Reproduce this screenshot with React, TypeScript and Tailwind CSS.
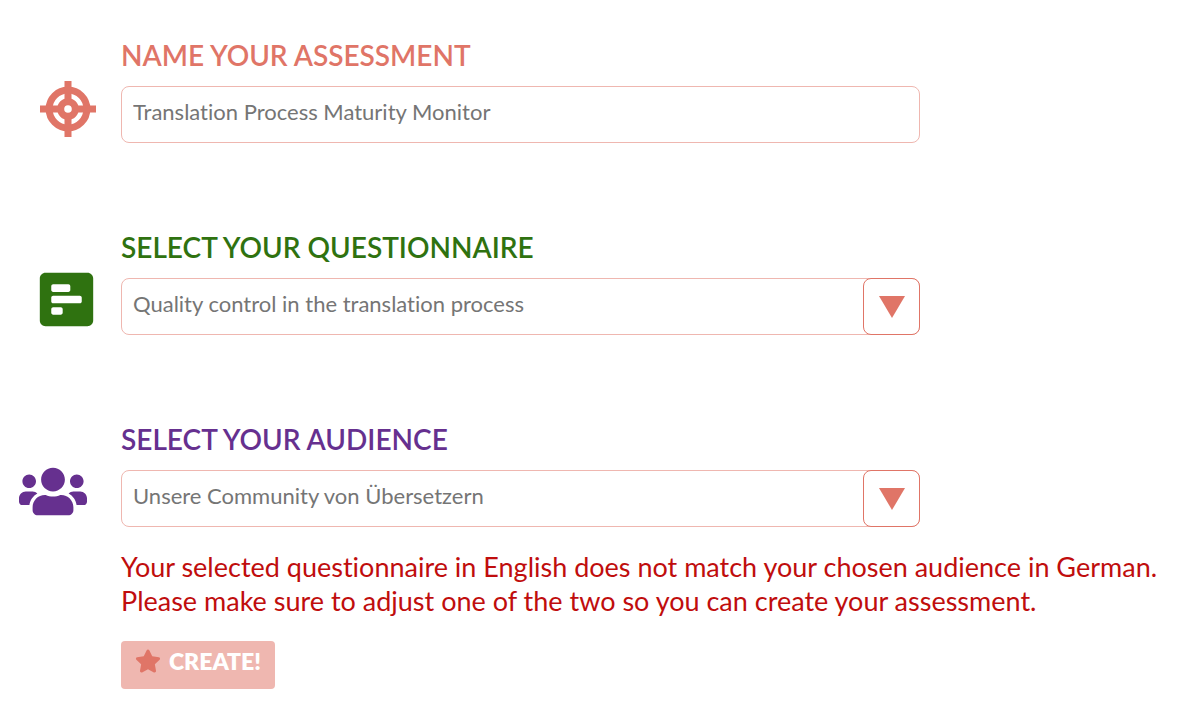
import { useState, type ReactNode } from "react";
import { FaPollH, FaStar, FaUsers } from "react-icons/fa";

function TargetIcon() {
  return (
    <svg viewBox="0 0 56 56" className="h-14 w-14" aria-hidden="true">
      <circle cx="28" cy="28" r="18.9" fill="none" stroke="currentColor" strokeWidth="7" />
      <circle cx="28" cy="28" r="7.3" fill="none" stroke="currentColor" strokeWidth="7" />
      <path
        d="M24.5 0h7v22h-7zM24.5 34h7v22h-7zM0 24.5h22v7H0zM34 24.5h22v7H34z"
        fill="currentColor"
      />
    </svg>
  );
}

type RowProps = {
  id: string;
  title: string;
  tone: string;
  iconPad: string;
  icon: ReactNode;
  children: ReactNode;
};

function Row({ id, title, tone, iconPad, icon, children }: RowProps) {
  return (
    <div className="flex">
      <div className={`w-[121px] shrink-0 ${iconPad} ${tone}`}>{icon}</div>
      <div className="min-w-0 max-w-[799px] flex-1">
        <label htmlFor={id} className={`block pb-3 text-[28px] leading-[38px] font-semibold ${tone}`}>
          {title}
        </label>
        {children}
      </div>
    </div>
  );
}

const fieldClass =
  "block h-[57px] w-full appearance-none rounded-lg border border-[#efb7b0] bg-white px-[11px] pb-1.5 text-[22px] text-[#757575] outline-none";

function SelectField({ id, options }: { id: string; options: string[] }) {
  const [value, setValue] = useState(options[0]);
  return (
    <div className="relative">
      <select
        id={id}
        value={value}
        onChange={(e) => setValue(e.target.value)}
        className={fieldClass}
      >
        {options.map((o) => (
          <option key={o}>{o}</option>
        ))}
      </select>
      <span className="pointer-events-none absolute inset-y-0 right-0 flex w-[57px] items-center justify-center rounded-lg border border-[#e07567] bg-white">
        <svg viewBox="0 0 26 22" className="h-[22px] w-[26px] text-[#e07567]" aria-hidden="true">
          <path d="M0 0h26L13 22z" fill="currentColor" />
        </svg>
      </span>
    </div>
  );
}

export default function App() {
  const [name, setName] = useState("Translation Process Maturity Monitor");
  return (
    <form
      className="flex min-h-screen flex-col gap-[85px] bg-white pt-9 pr-5 pb-4 font-['Lato','Liberation_Sans',sans-serif] [font-variant-ligatures:none]"
      onSubmit={(e) => e.preventDefault()}
    >
      <Row
        id="name"
        title="NAME YOUR ASSESSMENT"
        tone="text-[#e07567]"
        iconPad="pt-[45px] pl-10"
        icon={<TargetIcon />}
      >
        <input
          id="name"
          type="text"
          value={name}
          onChange={(e) => setName(e.target.value)}
          className={fieldClass}
        />
      </Row>
      <Row
        id="questionnaire"
        title="SELECT YOUR QUESTIONNAIRE"
        tone="text-[#2f7210]"
        iconPad="pt-[41px] pl-9"
        icon={<FaPollH className="h-[61px] w-[61px]" aria-hidden="true" />}
      >
        <SelectField id="questionnaire" options={["Quality control in the translation process"]} />
      </Row>
      <div>
        <Row
          id="audience"
          title="SELECT YOUR AUDIENCE"
          tone="text-[#66308f]"
          iconPad="pt-11 pl-[19px]"
          icon={<FaUsers className="h-[55px] w-[68px]" aria-hidden="true" />}
        >
          <SelectField id="audience" options={["Unsere Community von Übersetzern"]} />
        </Row>
        <div className="pt-[23px] pl-[121px]">
          <p role="alert" className="text-[27px] leading-[34px] text-[#c00d0d]">
            Your selected questionnaire in English does not match your chosen audience in German.
            <br />
            Please make sure to adjust one of the two so you can create your assessment.
          </p>
          <button
            type="submit"
            disabled
            className="mt-[23px] flex h-12 items-center gap-2 rounded bg-[#efb7b0] px-3.5 pb-2 text-[23px] font-extrabold text-white"
          >
            <FaStar className="h-6 w-[26px] text-[#e07567]" aria-hidden="true" />
            CREATE!
          </button>
        </div>
      </div>
    </form>
  );
}
